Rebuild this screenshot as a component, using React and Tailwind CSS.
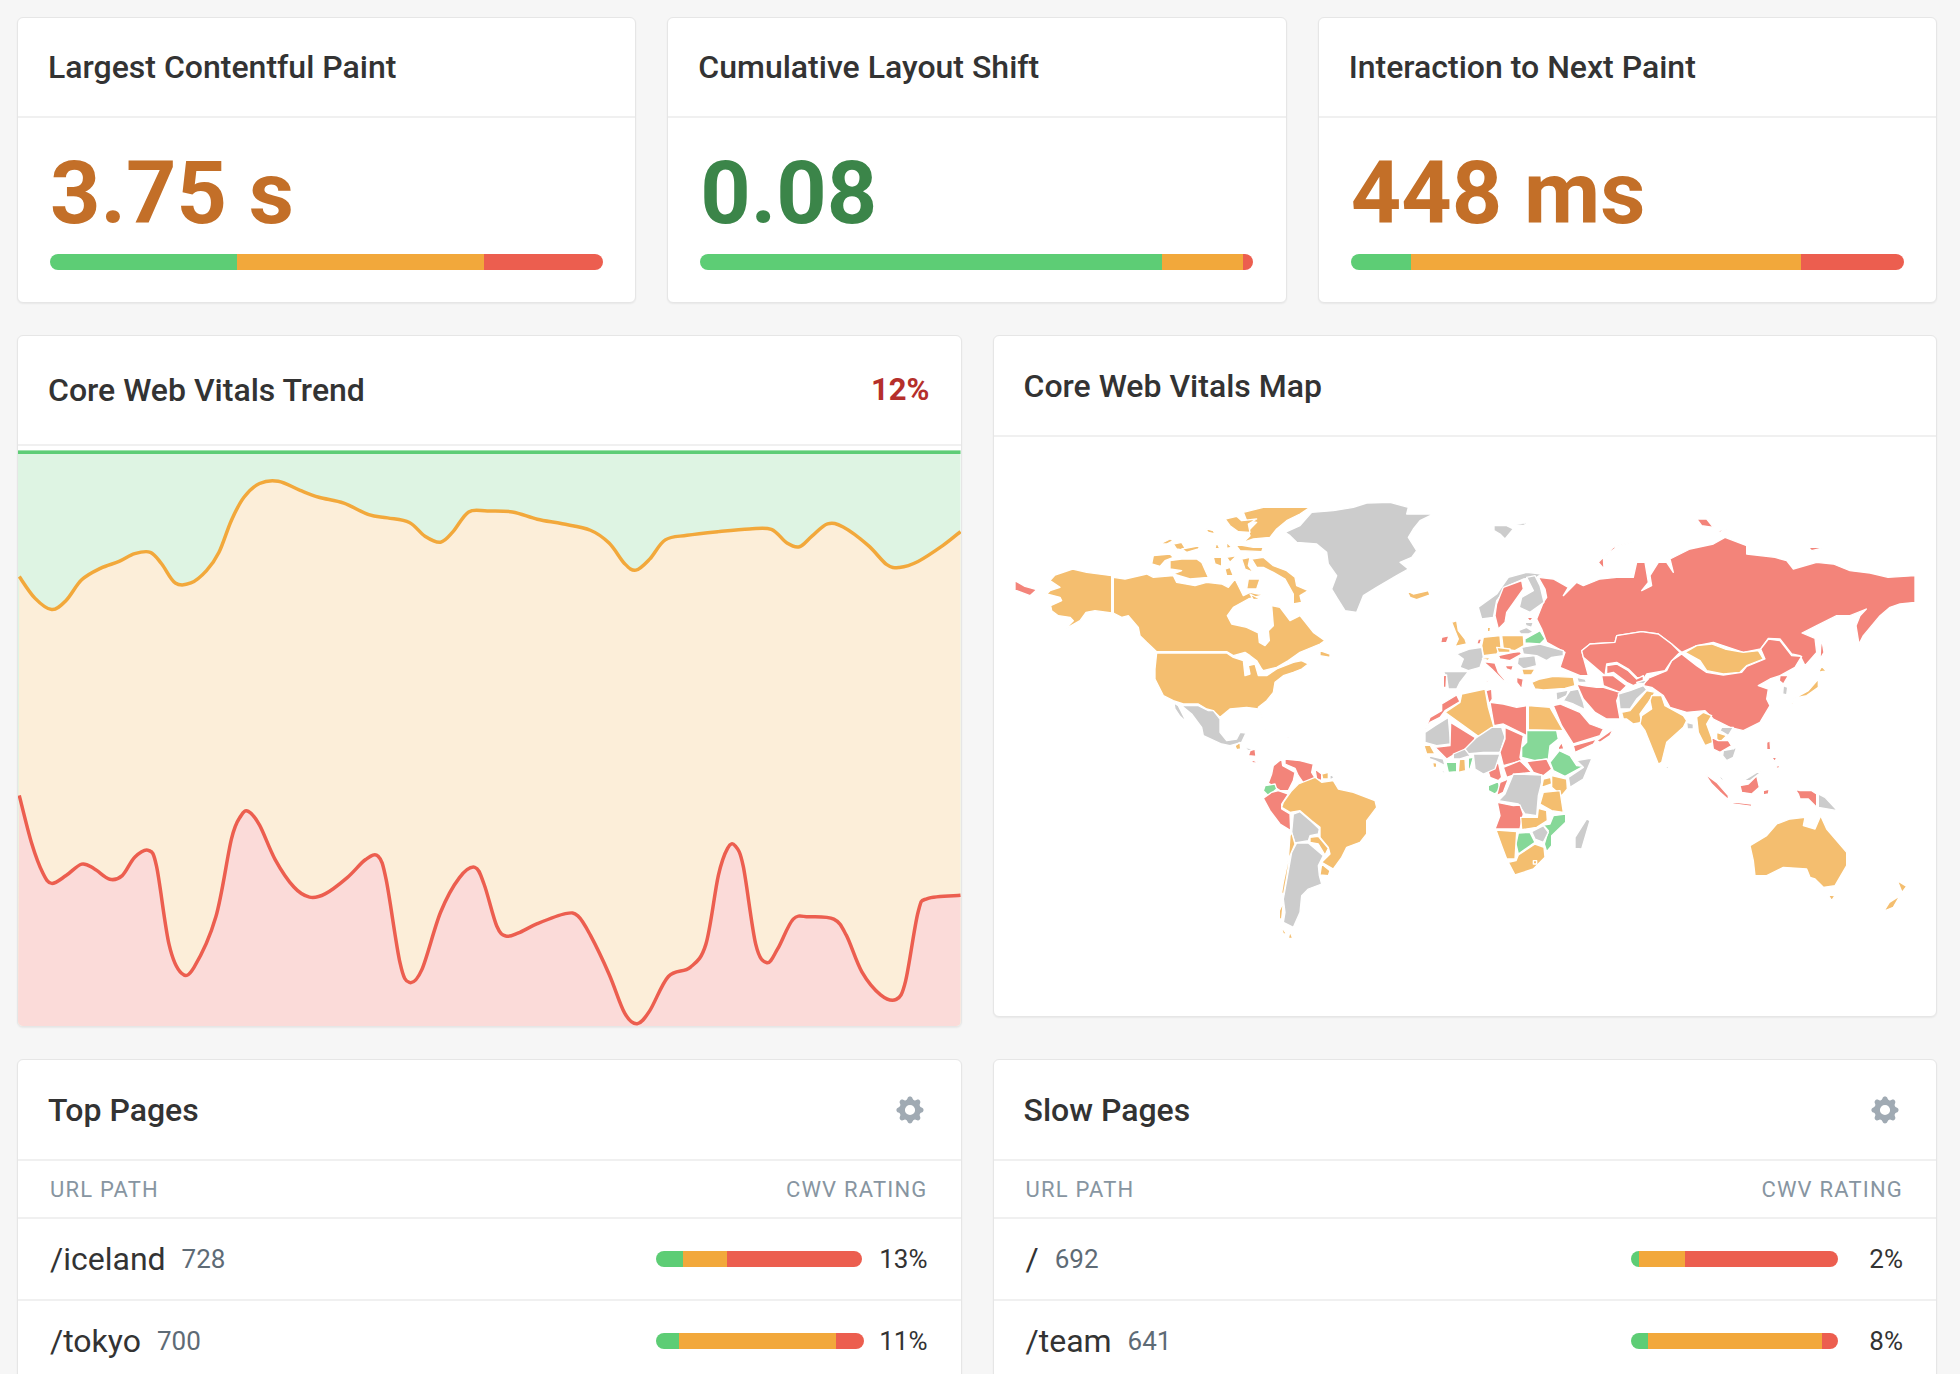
import React from "react";
import { HiCog } from "react-icons/hi";

const O = "#f4be6f";
const R = "#f3847a";
const G = "#cccccc";
const N = "#86d898";

// traced from the reference, x and y are 3x screen pixels
const americas = [
  [O, "165,288 218,270 260,280 335,290 335,402 285,395 258,400 240,425 195,450 220,425 210,415 175,410 155,395 152,380 185,365 180,355 140,345 150,335 180,325 150,305"],
  [O, "340,295 375,300 440,285 460,295 520,290 530,310 585,320 620,310 665,315 685,325 705,300 720,330 730,350 750,340 775,345 800,345 745,360 700,385 682,410 695,435 740,445 775,462 778,490 795,500 808,485 805,455 820,440 815,380 840,385 870,425 900,410 940,460 975,485 960,495 900,520 865,545 830,565 790,575 785,570 770,545 750,530 735,520 700,530 680,518 470,518 440,490 420,470 415,445 385,410 365,415 340,402"],
  [O, "470,522 680,522 700,535 730,545 735,590 750,585 745,560 765,555 775,590 800,590 830,570 880,550 905,545 925,555 905,570 880,580 850,590 825,610 820,640 800,665 775,685 790,725 775,690 740,685 690,690 660,715 640,695 620,690 595,675 550,675 520,665 490,650 465,600 465,570"],
  [O, "960,515 990,525 990,535 960,530"],
  [O, "730,100 790,85 930,85 900,105 860,125 830,150 810,175 760,180 730,190 750,170 745,155 770,130 740,125"],
  [O, "675,120 710,112 725,125 770,120 745,135 750,160 715,158 690,140"],
  [O, "705,195 760,205 790,205 785,218 720,215"],
  [O, "615,148 640,155 645,165 625,160"],
  [O, "480,195 510,180 520,185 500,195"],
  [O, "520,195 545,190 560,215 530,210"],
  [O, "545,210 600,200 595,210 560,220"],
  [O, "650,190 660,210 645,208"],
  [O, "680,190 695,205 680,208"],
  [O, "460,230 510,225 520,235 495,245 480,262 455,255"],
  [O, "510,245 545,240 590,240 605,250 625,295 570,300 520,285 545,275 510,270"],
  [O, "640,235 665,235 665,262 645,255"],
  [O, "680,235 710,230 690,250"],
  [O, "725,240 750,235 745,260 760,280 735,270"],
  [O, "755,240 790,235 820,260 860,275 885,295 890,320 925,335 900,350 905,370 880,375 880,345 855,300 820,280 790,265 770,265"],
  [O, "745,300 780,300 770,330 740,330"],
  [O, "675,270 690,265 700,290 680,290"],
  [O, "750,345 780,360 760,362"],
  [G, "855,160 900,140 935,100 1000,95 1060,85 1100,72 1170,70 1225,85 1220,105 1300,105 1260,125 1240,150 1225,175 1250,215 1235,235 1200,250 1225,270 1190,290 1130,325 1090,350 1070,400 1035,395 1010,355 995,330 1010,290 985,255 980,220 950,195 890,190 870,170"],
  [O, "1220,335 1240,345 1285,335 1290,348 1250,362 1230,355"],
  [R, "45,305 75,322 110,332 90,350 50,335 45,335"],
  [G, "545,680 595,680 625,695 640,695 660,720 660,760 680,785 710,780 720,760 738,762 725,790 690,800 665,795 610,770 605,745 575,705"],
  [G, "522,672 535,680 560,730 540,712 525,690"],
  [O, "705,800 720,790 722,810 710,812"],
  [G, "730,805 765,810 745,815"],
  [R, "750,815 765,810 768,832 745,830"],
  [R, "745,838 775,850 760,852"],
  [G, "785,748 825,765 815,765"],
  [R, "858,775 870,778 860,780"],
  [R, "820,860 845,840 848,860 885,880 880,905 865,935 840,935 805,912 815,885"],
  [R, "855,840 900,845 940,855 935,880 950,905 910,912 895,890 885,868 855,855"],
  [R, "945,870 965,885 965,905 950,900"],
  [O, "965,885 985,880 985,900 968,900"],
  [G, "990,885 1003,895 990,903"],
  [N, "795,920 825,915 830,930 805,950 790,935"],
  [R, "790,958 815,940 835,935 865,945 845,975 845,990 870,1005 872,1055 840,1035 810,995"],
  [O, "850,970 875,935 895,915 945,895 965,910 1000,905 1015,930 1060,940 1125,965 1130,985 1100,1025 1100,1065 1080,1090 1040,1105 1025,1135 1000,1170 965,1150 990,1125 985,1105 960,1075 960,1045 935,1025 900,995 870,1000 845,985"],
  [G, "880,1005 900,998 935,1028 958,1050 955,1065 930,1070 925,1085 885,1092 875,1060"],
  [O, "930,1075 955,1072 985,1108 975,1128 955,1095 930,1090"],
  [O, "965,1155 990,1175 985,1190 960,1188"],
  [G, "890,1092 925,1092 970,1130 955,1160 958,1190 965,1215 925,1230 905,1250 900,1300 880,1345 850,1330 855,1300 850,1260 868,1160 875,1120"],
  [O, "875,1060 885,1095 870,1130 860,1195 850,1250 845,1240 850,1210 865,1140 870,1070"],
  [O, "838,1295 850,1270 845,1320 838,1320"],
  [O, "842,1340 860,1365 850,1365"],
  [O, "865,1378 870,1358 878,1378"],
];

const asia = [
  [G, "432,140 470,140 490,150 465,180 450,165 432,155"],
  [G, "490,135 540,130 520,140"],
  [R, "560,420 580,370 590,355 585,330 565,295 610,300 655,325 640,350 680,310 700,320 750,300 800,295 850,295 860,250 885,250 895,310 875,335 905,320 900,290 925,250 950,250 970,280 960,240 1020,210 1090,195 1125,175 1190,200 1190,225 1275,235 1310,245 1330,270 1400,250 1450,255 1500,275 1560,282 1614,295 1695,290 1695,370 1650,375 1620,385 1590,410 1540,470 1527,495 1518,440 1530,410 1549,390 1500,410 1460,410 1400,440 1356,462 1395,478 1400,520 1365,560 1350,530 1325,525 1290,480 1255,478 1232,510 1180,520 1090,490 1040,500 995,520 965,495 925,465 875,458 800,470 795,490 720,495 695,515 700,535 715,590 690,590 630,565 645,520 590,490 575,450"],
  [R, "745,250 790,205 855,185 800,205 760,235 762,270"],
  [R, "1040,120 1070,120 1090,145 1055,140"],
  [R, "1105,155 1130,150 1110,160"],
  [R, "1375,205 1425,205 1385,215"],
  [O, "1005,520 1040,500 1085,495 1125,510 1180,520 1225,515 1240,540 1190,560 1170,580 1120,585 1070,575 1050,545"],
  [R, "995,525 1040,560 1070,580 1120,588 1175,580 1190,562 1245,540 1232,510 1255,480 1290,485 1325,530 1355,532 1335,565 1290,590 1260,600 1225,620 1255,630 1250,660 1260,680 1230,730 1180,755 1140,745 1090,720 1065,695 1010,700 960,685 940,650 905,625 880,620 890,600 950,575 965,545"],
  [R, "695,515 720,495 795,490 800,470 875,458 925,465 965,495 990,520 965,545 945,575 890,585 880,600 860,595 835,570 800,550 770,555 765,590 730,560 700,535"],
  [R, "770,560 800,555 835,575 860,600 880,590 880,605 850,620 830,610 790,580 770,585"],
  [R, "755,590 790,590 830,620 810,640 760,620"],
  [R, "700,620 740,625 760,625 810,640 800,665 810,720 770,720 735,700 700,660 680,615"],
  [G, "680,595 705,600 710,610 685,610"],
  [G, "805,645 840,635 880,620 890,632 860,660 840,690 810,690"],
  [G, "860,610 895,600 880,615"],
  [O, "820,720 815,700 840,695 865,665 890,635 915,640 895,670 870,705 875,730 850,735 830,720"],
  [O, "905,650 935,650 945,680 1000,710 1010,725 1000,745 950,790 935,850 925,855 895,780 885,755 870,735 875,710 905,690 900,665"],
  [G, "1010,730 1030,735 1030,750 1012,750"],
  [G, "950,855 957,868 948,868"],
  [O, "1040,715 1060,700 1085,710 1070,735 1090,790 1065,800 1045,760"],
  [O, "1100,760 1130,770 1110,790 1100,780"],
  [G, "1115,745 1150,745 1135,770 1110,755"],
  [R, "1085,775 1105,785 1135,785 1145,800 1110,820 1090,810"],
  [G, "1120,815 1145,810 1160,805 1150,835 1130,845 1118,830"],
  [O, "1140,790 1150,810 1145,800"],
  [R, "1290,590 1315,590 1300,615 1288,605"],
  [G, "1300,620 1313,625 1310,648 1298,645"],
  [O, "1405,600 1405,625 1370,650 1345,655 1330,660 1375,635"],
  [O, "1415,562 1428,575 1405,580"],
  [O, "1328,662 1332,675 1325,675"],
  [R, "1415,480 1422,520 1410,540 1412,505"],
  [R, "1250,790 1260,785 1262,812 1250,812"],
  [R, "1265,835 1280,835 1275,848"],
  [R, "1280,860 1290,860 1282,875"],
  [R, "1065,885 1100,910 1135,950 1135,962 1110,940 1085,915"],
  [R, "1140,968 1205,975 1205,982 1150,975"],
  [R, "1170,920 1195,915 1220,890 1228,925 1205,945 1175,940"],
  [G, "1180,905 1220,880 1235,878 1200,905"],
  [R, "1240,935 1258,930 1255,945 1240,948"],
  [G, "1100,880 1120,900 1115,905"],
  [R, "1335,930 1350,935 1385,935 1400,945 1400,985 1375,960 1350,960 1345,945"],
  [G, "1405,945 1425,955 1462,995 1405,985"],
  [O, "1200,1100 1250,1070 1280,1035 1320,1020 1365,1015 1360,1040 1395,1050 1412,1010 1430,1050 1490,1120 1490,1160 1455,1220 1420,1225 1395,1200 1380,1195 1370,1170 1300,1165 1250,1190 1215,1190 1210,1145"],
  [O, "1435,1248 1455,1250 1445,1265"],
  [G, "385,385 440,345 475,295 530,280 575,285 560,295 520,300 475,320 440,365 430,415 395,420"],
  [R, "435,410 440,375 460,325 515,305 520,330 495,365 470,400 465,430 445,450"],
  [G, "530,295 555,290 570,320 582,370 540,400 508,385 515,355 550,335"],
];

const europe = [
  [O, "155,100 170,95 175,125 195,150 200,165 165,172 175,150 165,125"],
  [R, "125,145 147,140 140,160 122,162"],
  [O, "250,145 300,140 303,175 290,195 250,200 245,170"],
  [O, "305,140 370,140 372,170 345,185 310,180"],
  [O, "262,115 272,115 270,128 262,128"],
  [R, "235,150 245,150 240,165 230,165"],
  [G, "170,195 210,180 245,175 250,205 240,235 205,245 180,235 190,210"],
  [G, "130,248 205,248 180,280 170,300 145,300 140,265"],
  [R, "130,260 140,258 138,295 130,295"],
  [R, "250,218 285,222 295,250 325,285 310,275 275,240"],
  [R, "262,268 266,280 260,280"],
  [O, "247,208 270,205 265,215"],
  [O, "290,175 330,180 330,190 295,190"],
  [R, "295,200 315,195 340,190 360,188 365,195 330,215 300,210"],
  [N, "300,217 312,217 305,222"],
  [G, "355,205 405,200 410,230 370,240 352,225"],
  [R, "315,230 340,230 335,245 320,240"],
  [O, "365,240 405,240 395,257 370,258"],
  [R, "350,265 370,270 365,300 350,280"],
  [G, "365,175 420,165 490,185 490,200 455,205 440,215 410,200 370,195"],
  [N, "375,150 420,125 435,150 420,165 375,162"],
  [G, "355,125 380,115 400,128 385,135 362,135"],
  [G, "375,100 400,100 395,115 378,110"],
  [R, "380,85 400,85 390,97"],
  [O, "395,280 420,270 460,262 520,265 525,290 495,298 430,303 405,300"],
  [G, "468,310 505,303 500,320 470,335"],
  [G, "510,305 535,300 550,340 555,362 520,345 490,335"],
];

const africa = [
  [R, "65,45 110,18 120,38 75,65 60,85 30,100 15,125 30,85 65,65"],
  [O, "125,15 195,0 205,55 222,115 175,142 75,70 120,40"],
  [R, "198,5 215,0 217,30 207,45"],
  [R, "210,40 250,45 290,55 320,50 320,140 250,105 222,110"],
  [O, "325,50 390,55 430,125 325,122"],
  [G, "15,130 45,110 85,85 92,165 50,170 15,160"],
  [R, "92,100 165,145 162,170 105,195 80,210 45,175 90,170"],
  [G, "170,145 215,115 245,115 255,145 240,190 190,190 140,195 135,180"],
  [R, "255,115 310,140 300,205 305,215 250,230 240,190 255,150"],
  [N, "320,125 410,125 415,150 390,170 385,210 345,215 305,205 305,175 320,160"],
  [R, "415,175 425,160 432,180 415,182"],
  [N, "418,185 450,200 470,230 490,232 435,262 400,245 390,220"],
  [G, "510,208 515,210 490,270 450,295 445,265 490,235 470,215"],
  [R, "320,218 380,210 395,240 370,260 340,250"],
  [R, "250,235 300,215 335,250 290,255 260,265"],
  [R, "205,250 235,220 245,265 235,275 210,265"],
  [G, "160,195 240,195 225,240 190,255 165,240"],
  [N, "145,207 160,205 150,240 145,240"],
  [O, "118,212 135,210 137,245 115,250"],
  [N, "78,220 110,220 110,248 85,250"],
  [G, "100,195 135,180 150,200 120,210 100,210"],
  [O, "12,170 30,168 45,195 20,195"],
  [G, "25,200 70,210 75,230 45,215 30,210"],
  [O, "38,220 50,222 50,235 40,235"],
  [R, "15,197 28,200 25,205"],
  [G, "55,235 78,250 70,252"],
  [N, "205,290 235,278 240,300 225,315 205,305"],
  [R, "240,280 265,270 250,310 230,320"],
  [G, "280,255 365,258 365,280 355,320 350,380 315,375 295,345 235,335 255,315"],
  [O, "370,270 392,265 395,285 365,295"],
  [O, "395,260 440,270 442,300 425,320 395,295"],
  [O, "370,310 420,305 430,370 395,365 360,345"],
  [R, "232,340 280,350 300,348 310,375 300,420 225,420 240,380"],
  [O, "352,385 355,358 380,365 382,395 350,415 305,422 302,385"],
  [N, "400,380 437,375 437,400 395,440 395,470 380,488 373,465 385,425 370,408 390,405"],
  [G, "335,428 370,410 385,430 370,460 345,450"],
  [N, "295,432 330,430 345,460 295,495 288,465"],
  [O, "228,423 290,428 285,510 260,510 245,470"],
  [O, "295,498 345,465 372,475 375,505 340,540 285,558 265,520 288,515"],
  [O, "340,515 350,515 350,525 340,525"],
  [G, "500,390 510,395 485,480 465,478 465,445"],
  [R, "400,50 420,45 480,70 510,105 550,120 540,140 460,165 425,110"],
  [R, "460,170 530,150 520,165 465,190"],
  [R, "530,155 580,120 570,140 540,160"],
];

const newZealand = [
  [O, "2692,1205 2720,1222 2706,1240"],
  [O, "2700,1250 2680,1285 2652,1296 2668,1270"],
];

const orangeLine = [
  [30, 538], [55, 585], [82, 610], [105, 590], [130, 545], [160, 520], [190, 505], [215, 488], [240, 485], [258, 510], [280, 552], [305, 552], [330, 525], [350, 485], [370, 415], [390, 365], [415, 335], [445, 330], [480, 350], [510, 365], [550, 378], [590, 403], [620, 410], [655, 420], [680, 450], [705, 463], [725, 440], [750, 397], [780, 395], [820, 397], [860, 413], [900, 423], [945, 437], [975, 465], [1000, 510], [1018, 524], [1040, 500], [1065, 458], [1100, 448], [1150, 440], [1200, 434], [1235, 435], [1260, 465], [1280, 473], [1300, 450], [1325, 423], [1350, 430], [1390, 470], [1420, 512], [1440, 518], [1470, 505], [1510, 470], [1538, 440],
];

const redLine = [
  [30, 1015], [50, 1120], [68, 1185], [82, 1207], [105, 1190], [130, 1165], [150, 1175], [175, 1198], [195, 1190], [215, 1150], [237, 1135], [250, 1170], [270, 1340], [290, 1403], [310, 1390], [345, 1280], [370, 1110], [385, 1060], [397, 1050], [415, 1080], [440, 1155], [470, 1215], [495, 1237], [520, 1230], [555, 1195], [585, 1155], [605, 1148], [618, 1200], [640, 1380], [655, 1423], [675, 1395], [705, 1270], [735, 1195], [760, 1172], [775, 1210], [795, 1300], [810, 1322], [830, 1315], [860, 1295], [905, 1273], [925, 1278], [945, 1320], [975, 1405], [1000, 1490], [1020, 1513], [1040, 1485], [1070, 1410], [1105, 1390], [1130, 1340], [1150, 1190], [1165, 1130], [1177, 1125], [1190, 1170], [1210, 1340], [1228, 1380], [1245, 1350], [1270, 1285], [1295, 1280], [1335, 1285], [1355, 1320], [1380, 1400], [1410, 1450], [1435, 1460], [1450, 1420], [1470, 1270], [1485, 1240], [1538, 1233],
];

const smooth = (pts) => {
  let d = `M${pts[0][0]} ${pts[0][1]}`;
  for (let i = 0; i < pts.length - 1; i++) {
    const p0 = pts[i - 1] || pts[i];
    const p1 = pts[i];
    const p2 = pts[i + 1];
    const p3 = pts[i + 2] || p2;
    const c1x = p1[0] + (p2[0] - p0[0]) / 6;
    const c1y = p1[1] + (p2[1] - p0[1]) / 6;
    const c2x = p2[0] - (p3[0] - p1[0]) / 6;
    const c2y = p2[1] - (p3[1] - p1[1]) / 6;
    d += ` C${c1x} ${c1y} ${c2x} ${c2y} ${p2[0]} ${p2[1]}`;
  }
  return d;
};

const orangePath = smooth(orangeLine);
const redPath = smooth(redLine);

const vitals = [
  { title: "Largest Contentful Paint", value: "3.75 s", color: "text-[#c36f28]", bar: [187, 247, 119] },
  { title: "Cumulative Layout Shift", value: "0.08", color: "text-[#3b8549]", bar: [462, 81, 10] },
  { title: "Interaction to Next Paint", value: "448 ms", color: "text-[#c36f28]", bar: [60, 390, 103] },
];

const Bar = ({ parts, className }) => (
  <div className={`flex overflow-hidden rounded-full ${className}`}>
    <div className="bg-[#5dcd75]" style={{ width: parts[0] }}></div>
    <div className="bg-[#f2a83b]" style={{ width: parts[1] }}></div>
    <div className="bg-[#ec5e4f]" style={{ width: parts[2] }}></div>
  </div>
);

const Card = ({ className = "", children }) => (
  <div className={`bg-white rounded-md border border-[#e6e6e6] shadow-[0_1px_2px_rgba(0,0,0,0.06)] overflow-hidden ${className}`}>
    {children}
  </div>
);

const Polys = ({ items, move }) => (
  <g transform={move}>
    {items.map(([fill, points], i) => (
      <polygon key={i} points={points} fill={fill} stroke="#ffffff" strokeWidth="4" strokeLinejoin="round" />
    ))}
  </g>
);

const PageTable = ({ title, rows }) => (
  <Card className="h-[400px]">
    <div className="h-[101px] flex items-center justify-between pl-[30px] pr-[34px] border-b-2 border-[#f0f0f0]">
      <h2 className="text-[32px] font-medium text-[#333333]">{title}</h2>
      <HiCog className="text-[#a0aab3] w-[34px] h-[34px]" />
    </div>
    <div className="h-[58px] flex items-center justify-between pl-[32px] pr-[33px] border-b-2 border-[#f0f0f0] text-[22px] tracking-[1.2px] text-[#8795a1]">
      <span>URL PATH</span>
      <span>CWV RATING</span>
    </div>
    {rows.map((row) => (
      <div key={row.path} className="h-[82px] flex items-center justify-between pl-[32px] pr-[33px] border-b-2 border-[#f0f0f0]">
        <div className="flex items-center gap-[16px]">
          <span className="text-[32px] text-[#333333]">{row.path}</span>
          <span className="text-[26px] text-[#5e6b76]">{row.hits}</span>
        </div>
        <div className="flex items-center">
          <div className="w-[208px]">
            <Bar parts={row.bar} className="h-[16px] w-fit" />
          </div>
          <span className="w-[64px] text-right text-[26px] text-[#333333]">{row.pct}</span>
        </div>
      </div>
    ))}
  </Card>
);

export default function App() {
  return (
    <div className="h-[1374px] overflow-hidden bg-[#f6f6f6] pl-[17px] pr-[23px] pt-[17px] font-['Roboto',sans-serif]">
      <div className="grid grid-cols-3 gap-[31px]">
        {vitals.map((v) => (
          <Card key={v.title} className="h-[286px]">
            <div className="h-[100px] flex items-center pl-[30px] border-b-2 border-[#f0f0f0]">
              <h2 className="text-[32px] font-medium text-[#333333]">{v.title}</h2>
            </div>
            <div className="px-[32px]">
              <div className={`h-[136px] flex items-center pt-[14px] text-[88px] font-bold leading-none ${v.color}`}>
                {v.value}
              </div>
              <Bar parts={v.bar} className="h-[16px] w-[553px]" />
            </div>
          </Card>
        ))}
      </div>

      <div className="grid grid-cols-2 gap-[31px] mt-[32px] items-start">
        <Card className="h-[692px] flex flex-col">
          <div className="h-[110px] shrink-0 flex items-center justify-between pl-[30px] pr-[31px] border-b-2 border-[#f0f0f0]">
            <h2 className="text-[32px] font-medium text-[#333333]">Core Web Vitals Trend</h2>
            <span className="text-[31px] font-bold text-[#b52f2b]">12%</span>
          </div>
          <svg viewBox="28 262 1510 1256" preserveAspectRatio="none" className="block w-full h-[577px] mt-[4px]">
            <rect x="28" y="262" width="1510" height="1256" fill="#def4e3" />
            <path d={`${orangePath} L1538 1518 L28 1518 Z`} fill="#fceed9" />
            <path d={`${redPath} L1538 1518 L28 1518 Z`} fill="#fbdbd9" />
            <path d="M28 267 L1538 267" stroke="#5dcd76" strokeWidth="3.5" fill="none" vectorEffect="non-scaling-stroke" />
            <path d={orangePath} stroke="#f2a83b" strokeWidth="3.5" fill="none" vectorEffect="non-scaling-stroke" />
            <path d={redPath} stroke="#ec5e4f" strokeWidth="3.5" fill="none" vectorEffect="non-scaling-stroke" />
          </svg>
        </Card>

        <Card className="h-[682px]">
          <div className="h-[101px] flex items-center pl-[30px] border-b-2 border-[#f0f0f0]">
            <h2 className="text-[32px] font-medium text-[#333333]">Core Web Vitals Map</h2>
          </div>
          <svg viewBox="0 0 2790 1440" className="block w-[930px] h-[480px] mt-[42px] ml-[6px]">
            <Polys items={americas} />
            <Polys items={asia} move="translate(1050 0)" />
            <Polys items={europe} move="translate(1200 330)" />
            <Polys items={africa} move="translate(1260 630)" />
            <Polys items={newZealand} />
          </svg>
        </Card>
      </div>

      <div className="grid grid-cols-2 gap-[31px] mt-[32px]">
        <PageTable
          title="Top Pages"
          rows={[
            { path: "/iceland", hits: "728", bar: [27, 44, 135], pct: "13%" },
            { path: "/tokyo", hits: "700", bar: [23, 157, 28], pct: "11%" },
          ]}
        />
        <PageTable
          title="Slow Pages"
          rows={[
            { path: "/", hits: "692", bar: [8, 46, 153], pct: "2%" },
            { path: "/team", hits: "641", bar: [17, 174, 16], pct: "8%" },
          ]}
        />
      </div>
    </div>
  );
}
